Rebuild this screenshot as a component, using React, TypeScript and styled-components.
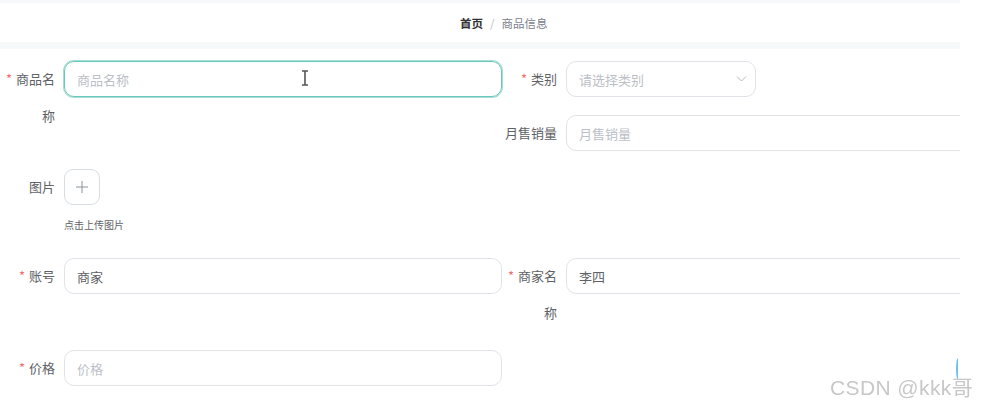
import styled, { createGlobalStyle } from "styled-components";

const Global = createGlobalStyle`
  html, body {
    margin: 0;
    padding: 0;
    background: #ffffff;
  }
  body {
    font-family: "Noto Sans CJK SC", "Noto Sans", "Liberation Sans", sans-serif;
    color: #606266;
  }
`;

const Page = styled.div`
  position: relative;
  width: 960px;
  height: 405px;
  overflow: hidden;
  background: #f5f9fa;
  padding-top: 3px;
  box-sizing: border-box;
`;

const Header = styled.div`
  height: 39px;
  background: #ffffff;
  display: flex;
  align-items: center;
  padding-left: 460px;
  font-size: 11.5px;
`;

const Crumb = styled.span<{ $strong?: boolean }>`
  font-weight: ${(p) => (p.$strong ? 700 : 400)};
  color: ${(p) => (p.$strong ? "#303133" : "#7b818a")};
`;

const Sep = styled.span`
  color: #b9bec6;
  margin: 0 7px;
`;

const Main = styled.div`
  margin-top: 7px;
  background: #ffffff;
  height: 400px;
  padding-top: 12px;
  box-sizing: border-box;
`;

const Row = styled.div`
  display: grid;
  grid-template-columns: 502px 502px;
  align-items: start;
`;

const Col = styled.div`
  display: flex;
  flex-direction: column;
`;

const Item = styled.div<{ $extra?: number }>`
  display: flex;
  align-items: flex-start;
  margin-bottom: ${(p) => 18 + (p.$extra ?? 0)}px;
`;

const Label = styled.label`
  width: 55px;
  flex: none;
  margin-right: 9px;
  text-align: right;
  font-size: 13px;
  line-height: 37px;
  color: #606266;
  margin-top: -1px;
`;

const Star = styled.span`
  color: #f56c6c;
  margin-right: 4px;
`;

const Field = styled.div<{ $focus?: boolean; $width?: number }>`
  width: ${(p) => p.$width ?? 438}px;
  height: 36px;
  flex: none;
  box-sizing: border-box;
  border: 1px solid ${(p) => (p.$focus ? "#6cc8ba" : "#e0e3e8")};
  box-shadow: ${(p) => (p.$focus ? "0 0 0 1px #a6ddd4" : "none")};
  border-radius: 10px;
  display: flex;
  align-items: center;
  padding: 0 12px;
  font-size: 13px;
  position: relative;
`;

const Placeholder = styled.span`
  color: #bcc0c8;
`;

const Value = styled.span`
  color: #606266;
`;

const Arrow = styled.svg`
  position: absolute;
  right: 8px;
  top: 13px;
`;

const UploadWrap = styled.div`
  display: flex;
  flex-direction: column;
  padding-bottom: 7px;
`;

const UploadBox = styled.div`
  width: 36px;
  height: 36px;
  box-sizing: border-box;
  border: 1px solid #d8dde4;
  border-radius: 9px;
  display: flex;
  align-items: center;
  justify-content: center;
`;

const Hint = styled.div`
  margin-top: 12px;
  font-size: 10px;
  line-height: 16px;
  color: #606266;
`;

const Cursor = styled.svg`
  position: absolute;
  left: 301px;
  top: 70px;
`;

const Bubble = styled.div`
  position: absolute;
  left: 956px;
  top: 358px;
  width: 4px;
  height: 22px;
  box-sizing: border-box;
  border-left: 2px solid #6fbff0;
  border-radius: 100% 0 0 100%;
`;

const Watermark = styled.div`
  position: fixed;
  left: 830px;
  top: 371px;
  font-family: "Liberation Sans", "Noto Sans CJK SC", sans-serif;
  font-size: 21px;
  color: #c8c8c8;
  letter-spacing: 0.4px;
`;

export default function App() {
  return (
    <>
      <Global />
      <Page>
        <Header>
          <Crumb $strong>首页</Crumb>
          <Sep>/</Sep>
          <Crumb>商品信息</Crumb>
        </Header>
        <Main>
          <Row>
            <Col>
              <Item>
                <Label>
                  <Star>*</Star>商品名称
                </Label>
                <Field $focus>
                  <Placeholder>商品名称</Placeholder>
                </Field>
              </Item>
            </Col>
            <Col>
              <Item>
                <Label>
                  <Star>*</Star>类别
                </Label>
                <Field $width={190}>
                  <Placeholder>请选择类别</Placeholder>
                  <Arrow width="11" height="8" viewBox="0 0 11 8">
                    <path d="M1 1.5 L5.5 6 L10 1.5" fill="none" stroke="#b4b8bf" strokeWidth="1" />
                  </Arrow>
                </Field>
              </Item>
              <Item>
                <Label>月售销量</Label>
                <Field>
                  <Placeholder>月售销量</Placeholder>
                </Field>
              </Item>
            </Col>
          </Row>
          <Row>
            <Col>
              <Item>
                <Label>图片</Label>
                <UploadWrap>
                  <UploadBox>
                    <svg width="14" height="14" viewBox="0 0 14 14">
                      <path d="M7 1 V13 M1 7 H13" stroke="#8c9199" strokeWidth="1" />
                    </svg>
                  </UploadBox>
                  <Hint>点击上传图片</Hint>
                </UploadWrap>
              </Item>
            </Col>
          </Row>
          <Row>
            <Col>
              <Item>
                <Label>
                  <Star>*</Star>账号
                </Label>
                <Field>
                  <Value>商家</Value>
                </Field>
              </Item>
            </Col>
            <Col>
              <Item $extra={1}>
                <Label>
                  <Star>*</Star>商家名称
                </Label>
                <Field>
                  <Value>李四</Value>
                </Field>
              </Item>
            </Col>
          </Row>
          <Row>
            <Col>
              <Item>
                <Label>
                  <Star>*</Star>价格
                </Label>
                <Field>
                  <Placeholder>价格</Placeholder>
                </Field>
              </Item>
            </Col>
          </Row>
        </Main>
        <Cursor width="8" height="16" viewBox="0 0 8 16">
          <path d="M1 1 H7 M4 1 V15 M1 15 H7" stroke="#555" strokeWidth="1.6" fill="none" />
        </Cursor>
        <Bubble />
      </Page>
      <Watermark>CSDN @kkk哥</Watermark>
    </>
  );
}
